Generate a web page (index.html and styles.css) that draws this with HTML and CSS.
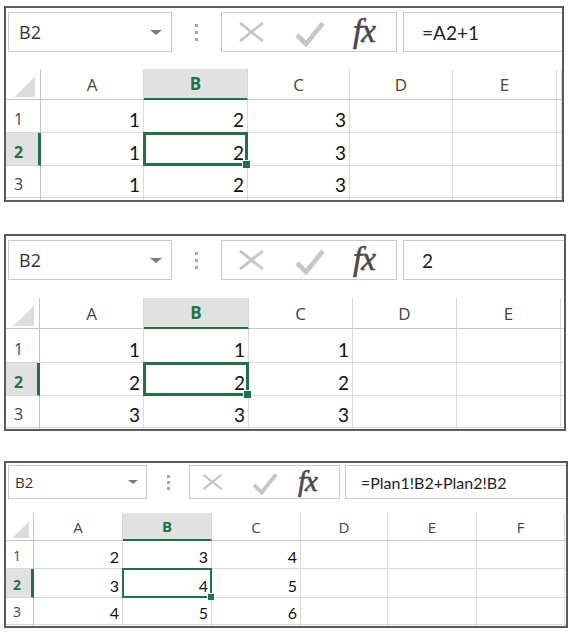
FILE: index.html
```html
<!DOCTYPE html>
<html>
<head>
<meta charset="utf-8">
<link rel="stylesheet" href="styles.css">
</head>
<body>

<div class="sheet s1">
  <div class="bar">
    <div class="namebox"><span>B2</span><span class="caret"></span></div>
    <div class="dots"><i></i><i></i><i></i></div>
    <div class="icons">
      <svg class="ico-x" viewBox="0 0 28 21"><path d="M2 1 L26 20 M26 1 L2 20"/></svg>
      <svg class="ico-ok" viewBox="0 0 30 27"><path d="M2 15 L11 24 L28 3"/></svg>
      <span class="fx">fx</span>
    </div>
    <div class="formula">=A2+1</div>
  </div>
  <div class="grid">
    <div class="corner"></div><div class="ch">A</div><div class="ch on">B</div><div class="ch">C</div><div class="ch">D</div><div class="ch">E</div><div class="ch"></div>
    <div class="rh">1</div><div class="c">1</div><div class="c">2</div><div class="c">3</div><div class="c"></div><div class="c"></div><div class="c"></div>
    <div class="rh on">2</div><div class="c">1</div><div class="c sel">2<span class="handle"></span></div><div class="c">3</div><div class="c"></div><div class="c"></div><div class="c"></div>
    <div class="rh">3</div><div class="c">1</div><div class="c">2</div><div class="c">3</div><div class="c"></div><div class="c"></div><div class="c"></div>
    <div class="rh"></div><div class="c"></div><div class="c"></div><div class="c"></div><div class="c"></div><div class="c"></div><div class="c"></div>
  </div>
</div>

<div class="sheet s2">
  <div class="bar">
    <div class="namebox"><span>B2</span><span class="caret"></span></div>
    <div class="dots"><i></i><i></i><i></i></div>
    <div class="icons">
      <svg class="ico-x" viewBox="0 0 28 21"><path d="M2 1 L26 20 M26 1 L2 20"/></svg>
      <svg class="ico-ok" viewBox="0 0 30 27"><path d="M2 15 L11 24 L28 3"/></svg>
      <span class="fx">fx</span>
    </div>
    <div class="formula">2</div>
  </div>
  <div class="grid">
    <div class="corner"></div><div class="ch">A</div><div class="ch on">B</div><div class="ch">C</div><div class="ch">D</div><div class="ch">E</div><div class="ch"></div>
    <div class="rh">1</div><div class="c">1</div><div class="c">1</div><div class="c">1</div><div class="c"></div><div class="c"></div><div class="c"></div>
    <div class="rh on">2</div><div class="c">2</div><div class="c sel">2<span class="handle"></span></div><div class="c">2</div><div class="c"></div><div class="c"></div><div class="c"></div>
    <div class="rh">3</div><div class="c">3</div><div class="c">3</div><div class="c">3</div><div class="c"></div><div class="c"></div><div class="c"></div>
    <div class="rh"></div><div class="c"></div><div class="c"></div><div class="c"></div><div class="c"></div><div class="c"></div><div class="c"></div>
  </div>
</div>

<div class="sheet s3">
  <div class="bar">
    <div class="namebox"><span>B2</span><span class="caret"></span></div>
    <div class="dots"><i></i><i></i><i></i></div>
    <div class="icons">
      <svg class="ico-x" viewBox="0 0 28 21"><path d="M2 1 L26 20 M26 1 L2 20"/></svg>
      <svg class="ico-ok" viewBox="0 0 30 27"><path d="M2 15 L11 24 L28 3"/></svg>
      <span class="fx">fx</span>
    </div>
    <div class="formula">=Plan1!B2+Plan2!B2</div>
  </div>
  <div class="grid">
    <div class="corner"></div><div class="ch">A</div><div class="ch on">B</div><div class="ch">C</div><div class="ch">D</div><div class="ch">E</div><div class="ch">F</div><div class="ch"></div>
    <div class="rh">1</div><div class="c">2</div><div class="c">3</div><div class="c">4</div><div class="c"></div><div class="c"></div><div class="c"></div><div class="c"></div>
    <div class="rh on">2</div><div class="c">3</div><div class="c sel">4<span class="handle"></span></div><div class="c">5</div><div class="c"></div><div class="c"></div><div class="c"></div><div class="c"></div>
    <div class="rh">3</div><div class="c">4</div><div class="c">5</div><div class="c">6</div><div class="c"></div><div class="c"></div><div class="c"></div><div class="c"></div>
    <div class="rh"></div><div class="c"></div><div class="c"></div><div class="c"></div><div class="c"></div><div class="c"></div><div class="c"></div><div class="c"></div>
  </div>
</div>

</body>
</html>
```

FILE: styles.css
```css
* { box-sizing: border-box; margin: 0; padding: 0; }

body {
  background: #fff;
  font-family: "Open Sans", "Noto Sans", sans-serif;
  color: #444;
  padding-left: 4px;
}

.sheet {
  border: 2px solid #5a5a5a;
  display: flex;
  flex-direction: column;
  overflow: hidden;
  background: #fff;
}
.s1 { margin-top: 6px; width: 560px; height: 196px; }
.s2 { margin-top: 32px; width: 562px; height: 197px; }
.s3 { margin-top: 30px; width: 564px; height: 167px; }

/* ---------- formula bar ---------- */
.bar {
  display: flex;
  align-items: flex-start;
  padding-left: 2px;
  flex: none;
}
.s1 .bar, .s2 .bar { padding-top: 4px; }
.s1 .bar { height: 61px; }
.s2 .bar { height: 62px; }
.s3 .bar { padding-top: 2px; height: 50px; }

.namebox {
  border: 1px solid #cacaca;
  display: flex;
  align-items: center;
  justify-content: space-between;
  color: #333;
  flex: none;
}
.s1 .namebox, .s2 .namebox {
  width: 164px; height: 40px;
  padding: 0 9px 0 10px;
  font-size: 18px;
}
.s3 .namebox {
  width: 139px; height: 34px;
  padding: 0 8px 0 6px;
  font-size: 15px;
}
.caret {
  width: 0; height: 0;
  border-left: 6px solid transparent;
  border-right: 6px solid transparent;
  border-top: 5px solid #7a7a7a;
}
.s3 .caret {
  border-left-width: 5px;
  border-right-width: 5px;
  border-top-width: 4px;
}

.dots {
  display: flex;
  flex-direction: column;
  align-items: center;
  justify-content: center;
  gap: 4px;
  flex: none;
}
.s1 .dots, .s2 .dots { width: 49px; height: 40px; }
.s3 .dots { width: 42px; height: 34px; gap: 3px; }
.dots i { display: block; width: 3px; height: 3px; background: #a8a8a8; }

.icons {
  border: 1px solid #cacaca;
  display: flex;
  align-items: center;
  flex: none;
}
.s1 .icons, .s2 .icons { width: 176px; height: 40px; padding-left: 16px; }
.s3 .icons { width: 151px; height: 34px; padding-left: 12px; }

.icons svg { display: block; fill: none; stroke: #c6c6c6; }
.ico-x { stroke-width: 3; }
.ico-ok { stroke-width: 4.6; stroke-linejoin: miter; }
.s1 .ico-x, .s2 .ico-x { width: 27px; height: 20px; }
.s1 .ico-ok, .s2 .ico-ok { width: 30px; height: 27px; margin-left: 30px; margin-top: 3px; }
.s3 .ico-x { width: 21px; height: 16px; }
.s3 .ico-ok { width: 26px; height: 23px; margin-left: 29px; margin-top: 3px; }

.fx {
  font-family: "Liberation Serif", serif;
  font-style: italic;
  color: #4a4a4a;
  line-height: 1;
  letter-spacing: -1px;
  -webkit-text-stroke: 0.6px #4a4a4a;
}
.s1 .fx, .s2 .fx { font-size: 33px; margin-left: 28px; margin-top: -2px; }
.s3 .fx { font-size: 29px; margin-left: 20px; margin-top: -2px; }

.formula {
  flex: 1;
  border: 1px solid #cacaca;
  border-right: none;
  display: flex;
  align-items: center;
  font-family: Lato, "Open Sans", sans-serif;
  color: #222;
}
.s1 .formula, .s2 .formula { height: 40px; margin-left: 6px; padding-left: 18px; font-size: 19px; }
.s3 .formula { height: 34px; margin-left: 5px; padding-left: 15px; font-size: 16px; }

/* ---------- grid ---------- */
.grid {
  display: grid;
  overflow: hidden;
  flex: none;
}
.s1 .grid {
  grid-template-columns: 35px 103px 104px 102px 103px 104px 1fr;
  grid-template-rows: 31px 33px 33px 32px 1fr;
  height: 131px;
}
.s2 .grid {
  grid-template-columns: 34px 104px 105px 104px 104px 104px 1fr;
  grid-template-rows: 31px 34px 33px 32px 1fr;
  height: 131px;
}
.s3 .grid {
  grid-template-columns: 28px 89px 89px 89px 87px 89px 88px 1fr;
  grid-template-rows: 28px 28px 29px 27px 1fr;
  height: 113px;
}

.corner {
  border-right: 1px solid #c4c4c4;
  border-bottom: 1px solid #c4c4c4;
  background: linear-gradient(to bottom right, transparent 50%, #dcdcdc 50%) no-repeat;
}
.s1 .corner, .s2 .corner { background-size: 20px 21px; background-position: right 5px bottom 2px; }
.s3 .corner { background-size: 16px 17px; background-position: right 4px bottom 2px; }

.ch {
  border-right: 1px solid #d6d6d6;
  border-bottom: 1px solid #c4c4c4;
  display: flex;
  align-items: center;
  justify-content: center;
  color: #444;
}
.s1 .ch, .s2 .ch { font-size: 17px; }
.s3 .ch { font-size: 15px; }
.ch.on {
  background: #e1e1e1;
  border-bottom: 2px solid #217346;
  color: #217346;
  font-weight: 700;
}

.rh {
  border-right: 1px solid #c4c4c4;
  border-bottom: 1px solid #d6d6d6;
  display: flex;
  align-items: flex-end;
  color: #444;
  line-height: 1;
}
.s1 .rh, .s2 .rh { font-size: 16px; padding: 0 0 5px 8px; }
.s3 .rh { font-size: 14px; padding: 0 0 5px 7px; }
.rh.on {
  background: #e1e1e1;
  color: #217346;
  font-weight: 700;
  border-right: 3px solid #217346;
}

.c {
  border-right: 1px solid #dadada;
  border-bottom: 1px solid #dadada;
  display: flex;
  align-items: flex-end;
  justify-content: flex-end;
  font-family: Lato, "Open Sans", sans-serif;
  color: #111;
  line-height: 1;
}
.s1 .c, .s2 .c { font-size: 19px; padding: 0 3px 3px 0; }
.s3 .c { font-size: 16px; padding: 0 3px 3px 0; }

.c.sel { position: relative; }
.c.sel::before {
  content: "";
  position: absolute;
  left: -1px; top: -1px; right: -1px; bottom: -1px;
  border: 3px solid #217346;
}
.s3 .c.sel::before { border-width: 2px; }
.handle {
  position: absolute;
  right: -4px;
  bottom: -4px;
  width: 9px;
  height: 9px;
  background: #217346;
  border: 1px solid #fff;
}
.s3 .handle { width: 8px; height: 8px; right: -4px; bottom: -4px; }
```
